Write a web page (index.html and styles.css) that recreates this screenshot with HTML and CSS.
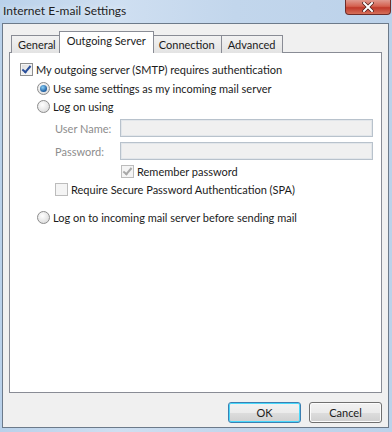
FILE: index.html
```html
<!DOCTYPE html>
<html lang="en">
<head>
    <meta charset="UTF-8">
    <title>Internet E-mail Settings</title>
    <link rel="stylesheet" href="styles.css">
</head>
<body>
    <div class="window">
        <!-- Title bar -->
        <div class="titlebar">
            <span class="title">Internet E-mail Settings</span>
            <button class="close-btn">
                <svg width="12" height="10" viewBox="0 0 12 10">
                    <path d="M2 1 L10 9 M10 1 L2 9" stroke="#4a1d1a" stroke-width="3.4" stroke-linecap="square"/>
                    <path d="M2 1 L10 9 M10 1 L2 9" stroke="#ffffff" stroke-width="2" stroke-linecap="square"/>
                </svg>
            </button>
        </div>

        <div class="client">
            <!-- Tabs -->
            <div class="tabs">
                <div class="tab">General</div>
                <div class="tab active">Outgoing Server</div>
                <div class="tab">Connection</div>
                <div class="tab">Advanced</div>
            </div>

            <div class="panel">
                <div class="row row-auth">
                    <span class="check checked"></span>
                    <span>My outgoing server (SMTP) requires authentication</span>
                </div>
                <div class="row indent row-same">
                    <span class="radio selected"></span>
                    <span>Use same settings as my incoming mail server</span>
                </div>
                <div class="row indent">
                    <span class="radio"></span>
                    <span>Log on using</span>
                </div>
                <div class="field field-user">
                    <label>User Name:</label>
                    <input type="text" disabled>
                </div>
                <div class="field field-pass">
                    <label>Password:</label>
                    <input type="password" disabled>
                </div>
                <div class="row remember">
                    <span class="check checked disabled"></span>
                    <span>Remember password</span>
                </div>
                <div class="row spa">
                    <span class="check disabled"></span>
                    <span>Require Secure Password Authentication (SPA)</span>
                </div>
                <div class="row indent row-incoming">
                    <span class="radio"></span>
                    <span>Log on to incoming mail server before sending mail</span>
                </div>
            </div>

            <!-- Dialog buttons -->
            <div class="buttons">
                <button class="btn default">OK</button>
                <button class="btn">Cancel</button>
            </div>
        </div>
    </div>
</body>
</html>
```

FILE: styles.css
```css
body {
    margin: 0;
    font-family: Lato, "Noto Sans", sans-serif;
    font-size: 11px;
    color: #1b1b1b;
}
.window {
    width: 392px;
    height: 432px;
    box-sizing: border-box;
    padding: 0 3px 3px 2px;
    background: linear-gradient(90deg, #b9d1ea 0%, #cfdff1 30%, #c2d6ec 60%, #bcd2ea 100%);
}
.titlebar {
    height: 23px;
    display: flex;
    justify-content: space-between;
    align-items: flex-start;
}
.title {
    margin: 3px 0 0 1px;
    font-size: 12px;
    color: #1e1e1e;
    text-shadow: 0 0 6px #eef4fb;
}
.close-btn {
    width: 46px;
    height: 15px;
    margin-right: -2px;
    padding: 0;
    border: 1px solid #6e2c28;
    border-top: none;
    border-radius: 0 0 4px 4px;
    background: linear-gradient(#e09a8f 0%, #d4614f 45%, #c0392a 55%, #d5705a 100%);
    display: flex;
    align-items: center;
    justify-content: center;
}
.client {
    height: 405px;
    box-sizing: border-box;
    border: 1px solid #6c7a8a;
    background-color: #f0f0f0;
    padding: 8px 6px 0 6px;
}
.tabs {
    display: flex;
    align-items: flex-end;
    height: 21px;
    padding-left: 2px;
    position: relative;
    z-index: 1;
    margin-bottom: -1px;
}
.tab {
    height: 18px;
    box-sizing: border-box;
    border: 1px solid #898c95;
    border-bottom: none;
    margin-right: -1px;
    padding: 0 6px;
    line-height: 17px;
    background: linear-gradient(#f2f2f2, #e3e3e3);
}
.tab.active {
    height: 22px;
    margin: 0 -1px 0 -3px;
    padding: 0 7px;
    background: #ffffff;
    line-height: 18px;
    position: relative;
    z-index: 2;
}
.tab.active + .tab {
    margin-left: -1px;
}
.panel {
    height: 341px;
    box-sizing: border-box;
    border: 1px solid #898c95;
    background-color: #ffffff;
    padding: 7px 0 0 10px;
}
.row {
    display: flex;
    align-items: center;
    height: 18px;
    white-space: nowrap;
}
.row .check,
.row .radio {
    margin-right: 3px;
}
.indent {
    padding-left: 17px;
}
.row-same {
    margin-top: 1px;
}
.check {
    width: 13px;
    height: 13px;
    box-sizing: border-box;
    border: 1px solid #8e8f8f;
    background: linear-gradient(135deg, #dcdcdc, #fbfbfb);
    box-shadow: inset 0 0 0 1px #f4f4f4;
    flex: none;
    position: relative;
}
.check.checked::after {
    content: "";
    position: absolute;
    left: 3px;
    top: 0px;
    width: 3px;
    height: 7px;
    border: solid #2a4f9a;
    border-width: 0 2px 2px 0;
    transform: rotate(40deg);
}
.check.disabled {
    border-color: #bcbcbc;
    background: #f4f4f4;
}
.check.disabled.checked::after {
    border-color: #a8a8a8;
}
.radio {
    width: 13px;
    height: 13px;
    box-sizing: border-box;
    border-radius: 50%;
    border: 1px solid #8c8c8c;
    background: radial-gradient(circle at 40% 35%, #ffffff, #d4d4d4);
    flex: none;
    position: relative;
}
.radio.selected::after {
    content: "";
    position: absolute;
    left: 2px;
    top: 2px;
    width: 7px;
    height: 7px;
    border-radius: 50%;
    background: radial-gradient(circle at 40% 35%, #8ad0f7, #1c5b9e 70%);
}
.field {
    display: flex;
    align-items: center;
    padding-left: 35px;
    height: 18px;
    white-space: nowrap;
}
.field-user {
    margin-top: 4px;
}
.field-pass {
    margin-top: 5px;
}
.field label {
    width: 65px;
    color: #8d8d8d;
}
.field input {
    width: 253px;
    height: 18px;
    box-sizing: border-box;
    margin: 0;
    border: 1px solid #b8c2cc;
    background-color: #f0f0f0;
    box-shadow: inset 0 0 0 1px #e2e6ea;
}
.remember {
    margin-top: 2px;
    padding-left: 101px;
}
.spa {
    padding-left: 35px;
}
.row-incoming {
    margin-top: 10px;
}
.buttons {
    display: flex;
    justify-content: flex-end;
    gap: 8px;
    margin-top: 9px;
}
.btn {
    width: 73px;
    height: 21px;
    box-sizing: border-box;
    border: 1px solid #707070;
    border-radius: 3px;
    background: linear-gradient(#f2f2f2 0%, #ebebeb 50%, #dddddd 51%, #cfcfcf 100%);
    box-shadow: inset 0 0 0 1px #fcfcfc;
    font-family: Lato, "Noto Sans", sans-serif;
    font-size: 11px;
    color: #1b1b1b;
    padding: 0;
}
.btn.default {
    border-color: #3c7fb1;
    box-shadow: inset 0 0 0 1px #48d8fb;
}
```
